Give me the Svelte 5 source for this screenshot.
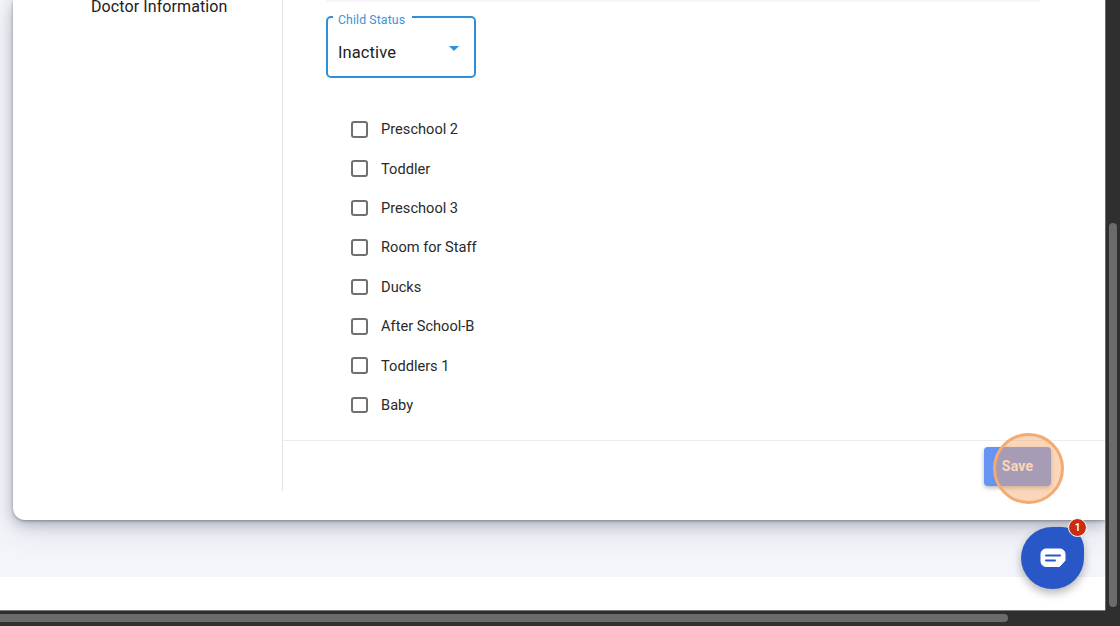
<script>
  const rooms = ['Preschool 2','Toddler','Preschool 3','Room for Staff','Ducks','After School-B','Toddlers 1','Baby'];
</script>

<div class="root">
  <div class="viewport">
    <div class="tinted">
      <div class="card">
        <aside class="side"><div class="sidetext">Doctor Information</div></aside>
        <main class="content">
          <div class="topbar"></div>
          <div class="formarea">
            <div class="select">
              <span class="label">Child Status</span>
              <span class="value">Inactive</span>
              <span class="caret"></span>
            </div>
            <ul class="rooms">
              {#each rooms as r}
                <li><span class="box"></span><span>{r}</span></li>
              {/each}
            </ul>
          </div>
          <footer class="foot">
            <button class="save">Save</button>
            <span class="spot"></span>
          </footer>
        </main>
      </div>
    </div>
    <div class="white"></div>
    <button class="fab" aria-label="Chat">
      <svg width="26" height="20" viewBox="0 0 26 20">
        <path d="M6 1h14a5 5 0 0 1 5 5v6.500L19.500 18.500H6a5 5 0 0 1-5-5V6a5 5 0 0 1 5-5z" fill="#fff" stroke="#fff" stroke-linejoin="round"/>
        <path d="M6 7.600h14M6 12.400h9" stroke="#2a57c8" stroke-width="2" stroke-linecap="round"/>
      </svg>
      <span class="badge">1</span>
    </button>
  </div>
  <div class="vtrack"><div class="vthumb"></div></div>
  <div class="htrack"><div class="hthumb"></div></div>
  <div class="corner"></div>
</div>

<style>
  :global(body) { margin: 0; background: #fff; }
  .root {
    width: 1120px; height: 626px; overflow: hidden;
    display: grid; grid-template-columns: 1105px 15px; grid-template-rows: 610px 16px;
    font-family: Roboto, "Liberation Sans", sans-serif; color: #212121;
  }
  .viewport { position: relative; display: flex; flex-direction: column; overflow: hidden; background: #fff; }
  .tinted { height: 577px; flex: none; background: #f4f5fa; padding-left: 13px; box-sizing: border-box; }
  .white { flex: 1; background: #fff; }
  .card {
    height: 520px; background: #fff; border-bottom-left-radius: 12px; display: flex;
    box-shadow: 0 1px 3px rgba(0,0,0,.3), 0 4px 14px rgba(40,44,70,.3), 0 12px 30px rgba(60,70,110,.12);
  }
  .side { width: 269px; flex: none; height: 491px; border-right: 1px solid #e2e2e2; }
  .sidetext { margin: -3px 0 0 78px; font-size: 16px; line-height: 20px; letter-spacing: .1px; color: #212121; }
  .content { flex: 1; display: flex; flex-direction: column; min-width: 0; }
  .topbar { height: 2px; margin: 0 65px 0 43px; background: #f6f6fa; flex: none; border-radius: 0 0 4px 4px; }
  .formarea { height: 438px; flex: none; border-bottom: 1px solid #ececec; padding-left: 43px; display: flow-root; }
  .select {
    width: 150px; height: 62px; box-sizing: border-box; margin: 14px 0 0; padding: 23px 0 0 10px;
    border: 2px solid #2f8fd8; border-radius: 5px; position: relative;
  }
  .label {
    position: absolute; left: 5px; top: -5px; padding: 0 7px 0 5px; background: #fff;
    font-size: 12.3px; line-height: 14px; color: #3a94d8; letter-spacing: .1px;
  }
  .value { display: block; font-size: 16.5px; line-height: 24px; letter-spacing: .1px; color: #212121; }
  .caret {
    position: absolute; right: 15px; top: 28px; width: 0; height: 0;
    border-left: 5px solid transparent; border-right: 5px solid transparent; border-top: 5px solid #2f8fd8;
  }
  .rooms { list-style: none; margin: 31.5px 0 0; padding: 0 0 0 25px; }
  .rooms li { height: 39.43px; display: flex; align-items: center; gap: 13.5px; font-size: 14.6px; color: #2a2a2a; }
  .box { box-sizing: content-box; border: 2.2px solid #707070; border-radius: 3px; width: 12.6px; height: 12.6px; flex: none; }
  .foot { flex: 1; position: relative; display: flex; justify-content: flex-end; align-items: flex-start; padding: 6px 54px 0 0; }
  .save {
    width: 67px; height: 39px; border: 0; border-radius: 4px; background: #6694f5; color: #fff; font: 700 14px Roboto, sans-serif;
    box-shadow: 0 2px 4px rgba(0,0,0,.28); letter-spacing: .2px; padding: 0 0 2px;
  }
  .spot {
    position: absolute; left: 710px; top: -8px; width: 71px; height: 71px; box-sizing: border-box; border-radius: 50%;
    background: rgba(245,165,105,.46); border: 3px solid #f5aa70;
  }
  .fab {
    position: absolute; left: 1021px; top: 527px; width: 63px; height: 62px; border: 0; padding: 0; border-radius: 50% 35% 50% 50%;
    background: #2a57c8; box-shadow: 0 4px 10px rgba(0,0,0,.3); display: flex; align-items: center; justify-content: center;
  }
  .badge {
    position: absolute; left: 47px; top: -9px; width: 17px; height: 17px; border-radius: 50%; border: 1.5px solid #fff; background: #cc2c10;
    color: #fff; font: 700 10px/17px Roboto, sans-serif; text-align: center;
  }
  .vtrack { background: #2f2f2f; border-left: 1px solid #6a6a6a; box-sizing: border-box; padding: 223px 3px 0 3px; }
  .vthumb { height: 384px; background: #6b6b6b; border-radius: 4px; }
  .htrack { background: #2f2f2f; border-top: 1px solid #7a7a7a; box-sizing: border-box; padding: 3px 0 0; }
  .hthumb { width: 1008px; height: 8px; background: #6b6b6b; border-radius: 0 4px 4px 0; }
  .corner { background: #2f2f2f; }
</style>
